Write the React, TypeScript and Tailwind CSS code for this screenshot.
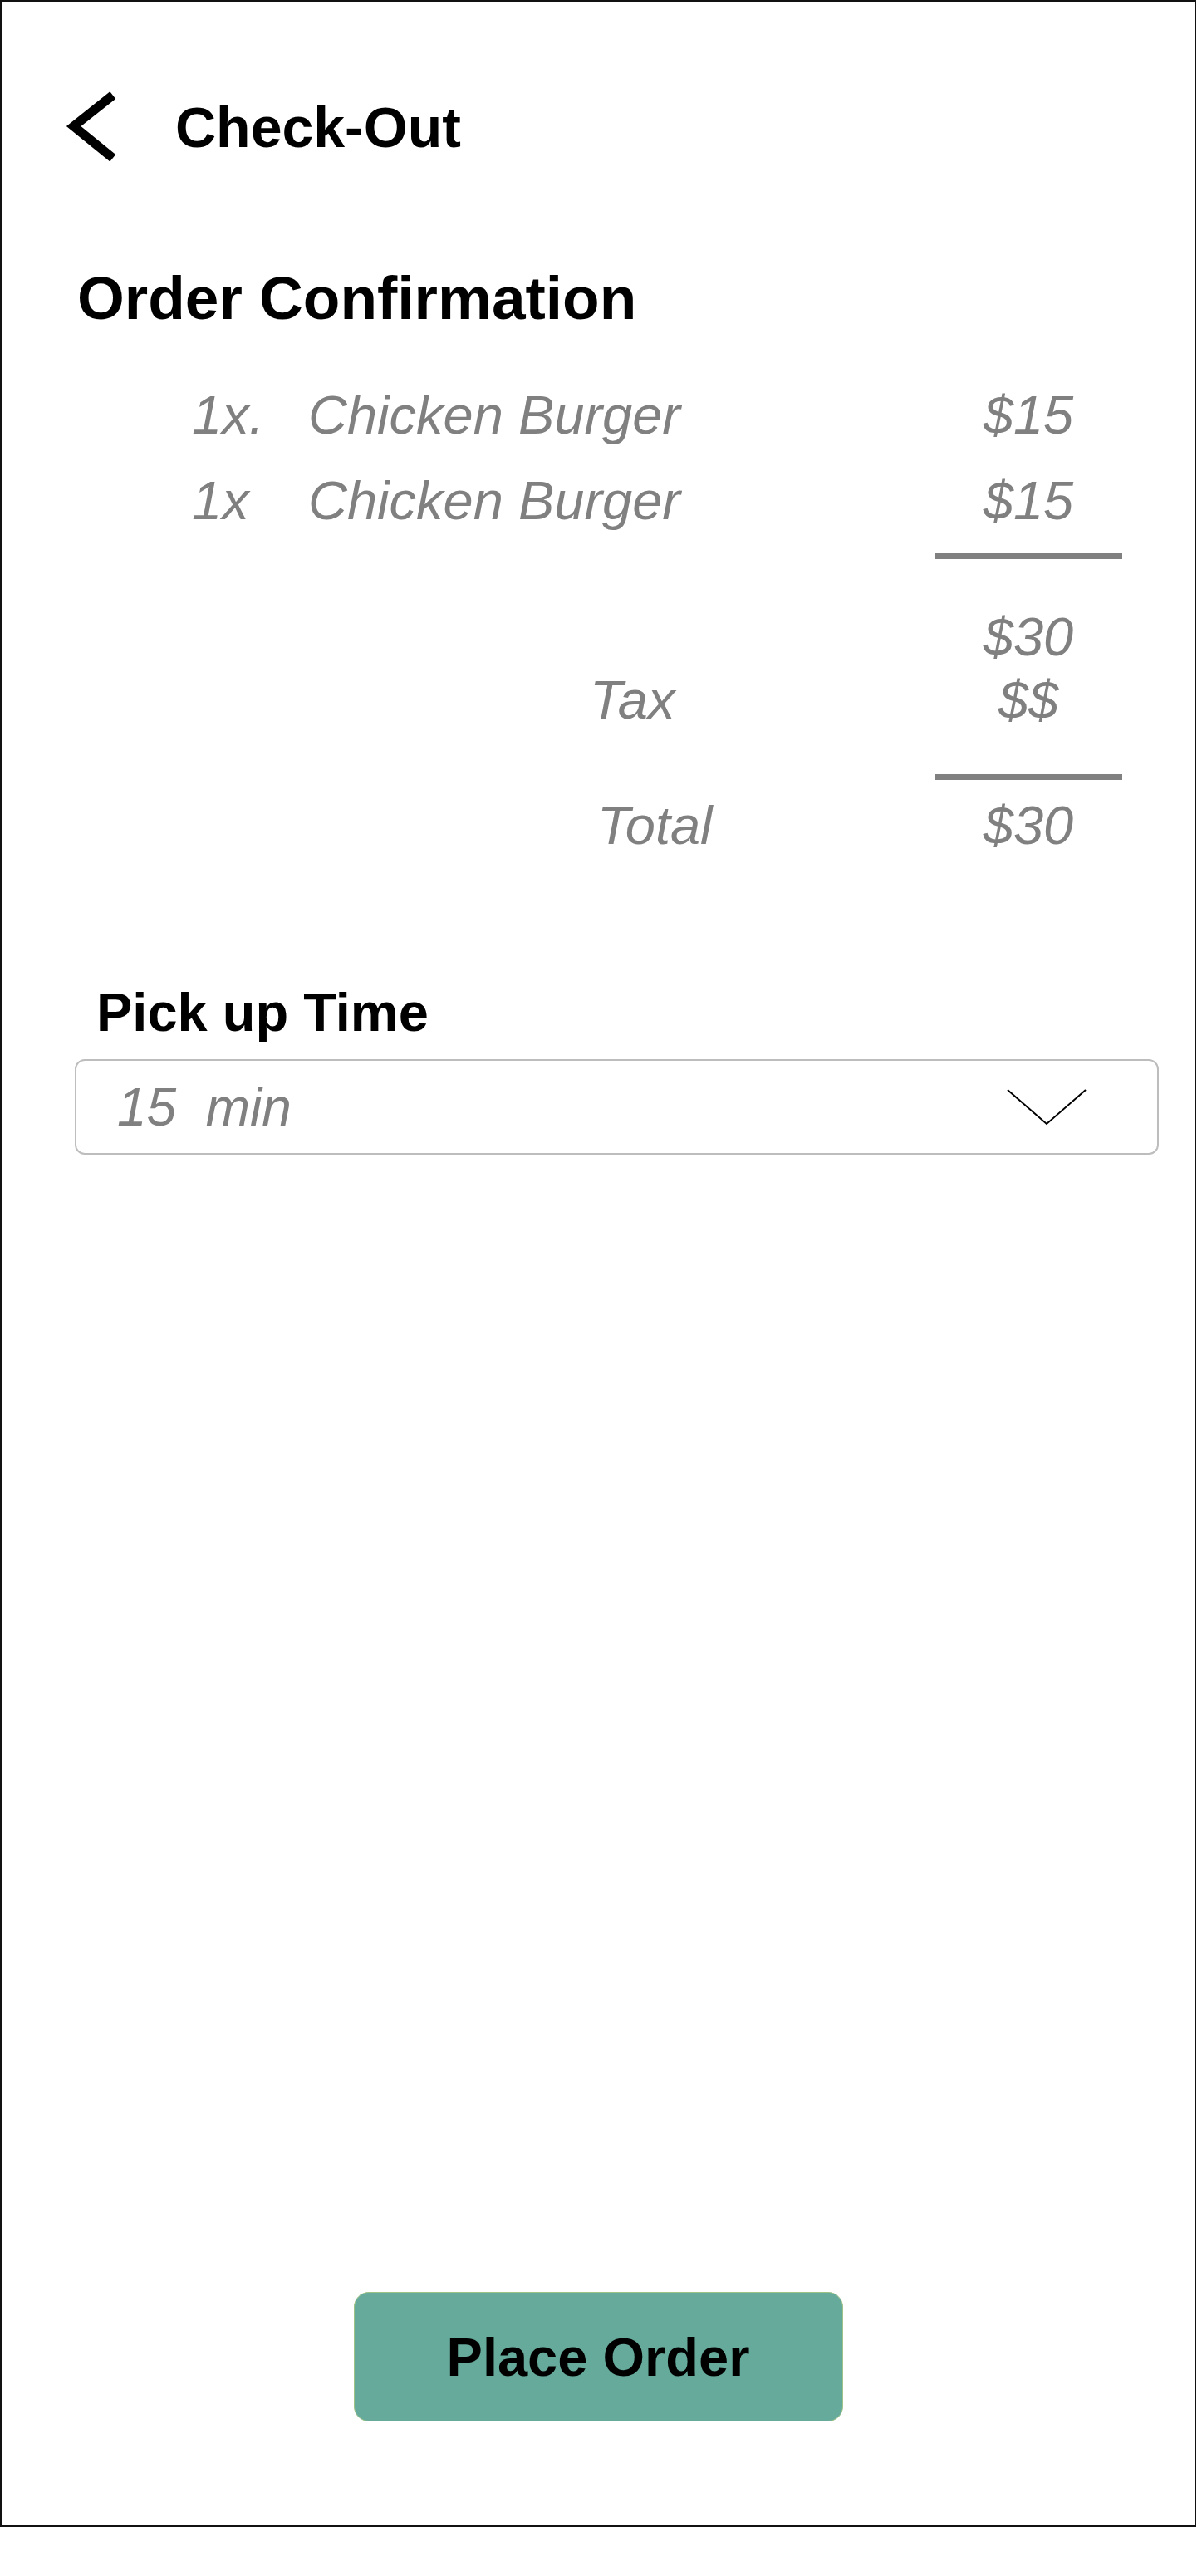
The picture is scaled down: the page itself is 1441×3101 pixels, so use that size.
const ITEMS = [
  { qty: "1x.", name: "Chicken Burger", price: "$15" },
  { qty: "1x", name: "Chicken Burger", price: "$15" },
];

function BackIcon() {
  return (
    <svg width="63" height="88" viewBox="0 0 63 88" fill="none">
      <polyline
        points="56.8,5.6 9.7,43 56.8,81.3"
        stroke="#000"
        strokeWidth="11"
        strokeLinejoin="miter"
        strokeLinecap="butt"
      />
    </svg>
  );
}

function ChevronDown() {
  return (
    <svg width="96" height="44" viewBox="0 0 96 44" fill="none">
      <polyline points="1,1 48,42 95,1" stroke="#000" strokeWidth="2" />
    </svg>
  );
}

function Divider({ className = "" }: { className?: string }) {
  return (
    <div className={`flex ${className}`}>
      <div className="ml-auto w-[226px] h-[7px] bg-[#808080]" />
    </div>
  );
}

export default function App() {
  return (
    <div className="w-[1441px] h-[3101px] bg-white font-['Liberation_Sans',Arial,sans-serif]">
      <div className="w-[1440px] h-[3042px] border-2 border-[#111] flex flex-col">
        {/* header */}
        <div className="flex items-center mt-[107px] ml-[77px] h-[88px]">
          <BackIcon />
          <h1 className="ml-[69px] text-[68px] leading-none font-bold text-black">Check-Out</h1>
        </div>

        <h2 className="mt-[125px] ml-[91px] text-[73px] leading-none font-bold text-black">
          Order Confirmation
        </h2>

        {/* order summary */}
        <div className="ml-[229px] w-[1120px] mt-[72px] italic text-[65px] leading-none text-[#808080]">
          <div className="flex flex-col gap-[38px]">
            {ITEMS.map((item, i) => (
              <div key={i} className="flex">
                <span className="w-[140px]">{item.qty}</span>
                <span className="flex-1">{item.name}</span>
                <span className="w-[226px] text-center">{item.price}</span>
              </div>
            ))}
          </div>

          <Divider className="mt-[31px]" />

          <div className="flex mt-[61px]">
            <span className="ml-auto w-[226px] text-center">$30</span>
          </div>
          <div className="flex mt-[11px]">
            <span className="ml-[479px]">Tax</span>
            <span className="ml-auto w-[226px] text-center">$$</span>
          </div>

          <Divider className="mt-[57px]" />

          <div className="flex mt-[22px]">
            <span className="ml-[488px]">Total</span>
            <span className="ml-auto w-[226px] text-center">$30</span>
          </div>
        </div>

        {/* pick up time */}
        <h3 className="mt-[160px] ml-[114px] text-[65px] leading-none font-bold text-black">
          Pick up Time
        </h3>
        <div className="mt-[24px] ml-[88px] w-[1305px] h-[115px] border-2 border-[#bdbdbd] rounded-[12px] flex items-center justify-between pl-[49px] pr-[85px]">
          <span className="italic text-[64px] leading-none text-[#808080] whitespace-pre">15  min</span>
          <ChevronDown />
        </div>

        <button className="mt-auto mb-[125px] mx-auto w-[589px] h-[156px] rounded-[18px] bg-[#66aa9b] border border-[#9cc286] flex items-center justify-center">
          <span className="text-[65px] leading-none font-bold text-black">Place Order</span>
        </button>
      </div>
    </div>
  );
}
